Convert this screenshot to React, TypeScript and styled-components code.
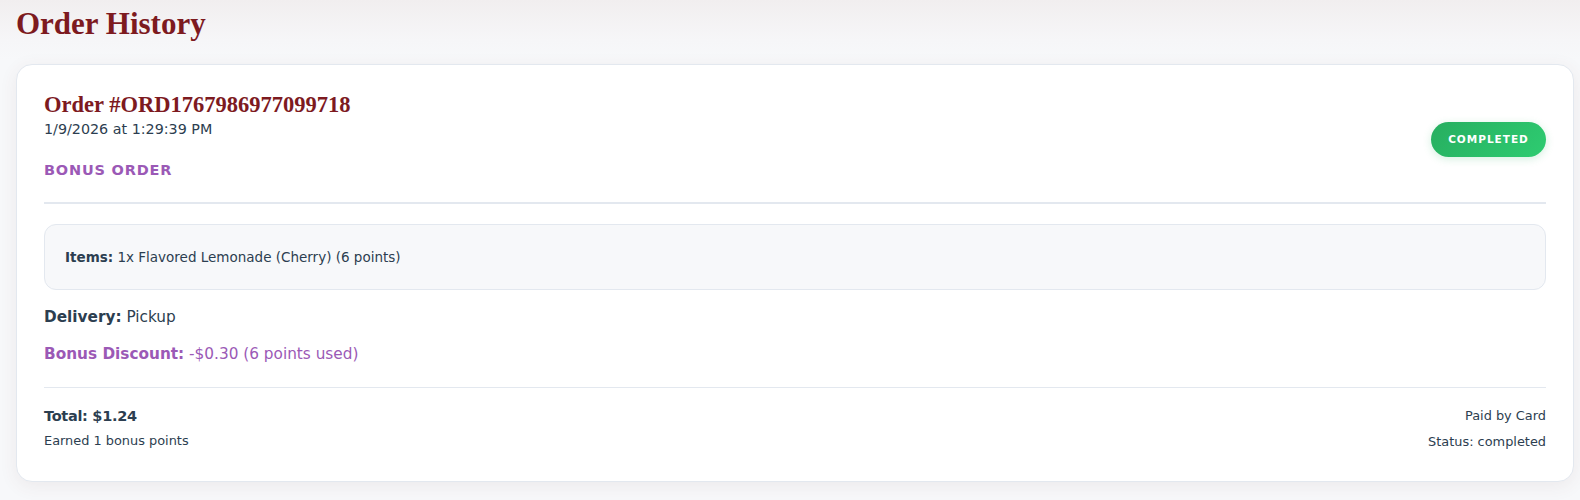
import React from "react";
import styled, { createGlobalStyle } from "styled-components";

const Global = createGlobalStyle`
  html, body { margin: 0; padding: 0; }
  body {
    background: #f7f8fa;
    font-family: "DejaVu Sans", "Open Sans", sans-serif;
    color: #2c3e50;
  }
`;

const Page = styled.div`
  min-height: 500px;
  box-sizing: border-box;
  padding: 0 6px 20px 16px;
  background: linear-gradient(180deg, #f1eeef 0px, #f6f6f8 40px, #f7f8fa 60px);
`;

const Title = styled.h1`
  margin: 0;
  padding-top: 4px;
  height: 60px;
  font-family: "Liberation Serif", "DejaVu Serif", serif;
  font-weight: 700;
  font-size: 31px;
  line-height: 40px;
  color: #7d1a1f;
`;

const Card = styled.div`
  background: #ffffff;
  border: 1px solid #e3e8ef;
  border-radius: 16px;
  padding: 27px 27px 30px;
  box-shadow: 0 4px 18px rgba(120, 60, 70, 0.08);
`;

const Header = styled.div`
  display: flex;
  justify-content: space-between;
  align-items: center;
  padding-bottom: 22px;
  border-bottom: 2px solid #e3e8ef;
`;

const HeaderInfo = styled.div`
  display: flex;
  flex-direction: column;
`;

const OrderId = styled.div`
  font-family: "Liberation Serif", "DejaVu Serif", serif;
  font-weight: 700;
  font-size: 22.5px;
  line-height: 26px;
  color: #7d1a1f;
`;

const DateText = styled.div`
  margin-top: 1px;
  font-size: 14.3px;
  line-height: 20px;
  color: #2c3e50;
`;

const BonusTag = styled.div`
  margin-top: 21px;
  font-size: 14.5px;
  font-weight: 700;
  line-height: 20px;
  letter-spacing: 0.8px;
  color: #9b59b6;
`;

const Badge = styled.div`
  margin-top: 6px;
  width: 115px;
  height: 35px;
  border-radius: 18px;
  background: linear-gradient(135deg, #27ae60, #2ecc71);
  color: #ffffff;
  font-size: 10.5px;
  font-weight: 700;
  letter-spacing: 1px;
  display: flex;
  align-items: center;
  justify-content: center;
  box-shadow: 0 2px 8px rgba(39, 174, 96, 0.2);
`;

const ItemsBox = styled.div`
  margin-top: 20px;
  background: #f7f8fa;
  border: 1px solid #e3e8ef;
  border-radius: 12px;
  padding: 20px 20px;
  font-size: 13.5px;
  line-height: 24px;
`;

const Strong = styled.strong`
  font-weight: 700;
`;

const DetailRow = styled.div<{ $purple?: boolean }>`
  font-size: 15.3px;
  line-height: 22px;
  margin-top: ${(p) => (p.$purple ? "15px" : "16px")};
  color: ${(p) => (p.$purple ? "#9b59b6" : "#2c3e50")};
`;

const Footer = styled.div`
  margin-top: 22px;
  padding-top: 17px;
  border-top: 1px solid #e3e8ef;
  display: flex;
  justify-content: space-between;
  align-items: flex-start;
`;

const FooterCol = styled.div<{ $right?: boolean }>`
  display: flex;
  flex-direction: column;
  align-items: ${(p) => (p.$right ? "flex-end" : "flex-start")};
`;

const TotalText = styled.div`
  font-size: 14.5px;
  font-weight: 700;
  line-height: 22px;
  letter-spacing: -0.3px;
`;

const SmallText = styled.div<{ $gap?: number }>`
  font-size: 12.9px;
  line-height: 18px;
  margin-top: ${(p) => p.$gap ?? 0}px;
`;

export default function App() {
  return (
    <>
      <Global />
      <Page>
        <Title>Order History</Title>
        <Card>
          <Header>
            <HeaderInfo>
              <OrderId>Order #ORD1767986977099718</OrderId>
              <DateText>1/9/2026 at 1:29:39 PM</DateText>
              <BonusTag>BONUS ORDER</BonusTag>
            </HeaderInfo>
            <Badge>COMPLETED</Badge>
          </Header>
          <ItemsBox>
            <Strong>Items:</Strong> 1x Flavored Lemonade (Cherry) (6 points)
          </ItemsBox>
          <DetailRow>
            <Strong>Delivery:</Strong> Pickup
          </DetailRow>
          <DetailRow $purple>
            <Strong>Bonus Discount:</Strong> -$0.30 (6 points used)
          </DetailRow>
          <Footer>
            <FooterCol>
              <TotalText>Total: $1.24</TotalText>
              <SmallText $gap={5}>Earned 1 bonus points</SmallText>
            </FooterCol>
            <FooterCol $right>
              <SmallText $gap={2}>Paid by Card</SmallText>
              <SmallText $gap={8}>Status: completed</SmallText>
            </FooterCol>
          </Footer>
        </Card>
      </Page>
    </>
  );
}
